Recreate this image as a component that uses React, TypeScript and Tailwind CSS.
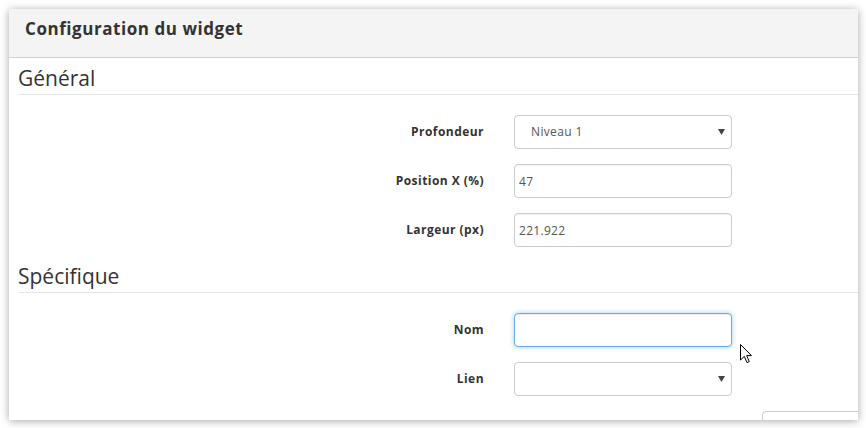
import React from 'react';

type Field = {
  label: string;
  kind: 'select' | 'input';
  value?: string;
  focused?: boolean;
};

const general: Field[] = [
  { label: 'Profondeur', kind: 'select', value: 'Niveau 1' },
  { label: 'Position X (%)', kind: 'input', value: '47' },
  { label: 'Largeur (px)', kind: 'input', value: '221.922' },
];

const specific: Field[] = [
  { label: 'Nom', kind: 'input', value: '', focused: true },
  { label: 'Lien', kind: 'select', value: '' },
];

const Caret = () => (
  <svg className="absolute right-[7px] top-[14px] pointer-events-none" width="7" height="6" viewBox="0 0 7 6">
    <path d="M0 0 L7 0 L3.5 6 Z" fill="#444" />
  </svg>
);

const FieldControl: React.FC<{ field: Field }> = ({ field }) => {
  if (field.kind === 'select') {
    return (
      <div className="relative h-[34px]">
        <select
          defaultValue={field.value}
          className="appearance-none w-full h-full rounded-[4px] border border-[#ccc] bg-white pl-[16px] text-[12px] tracking-[0.35px] text-[#555] outline-none"
        >
          <option value={field.value}>{field.value}</option>
        </select>
        <Caret />
      </div>
    );
  }
  return (
    <input
      readOnly
      value={field.value}
      className={`w-full h-[34px] rounded-[4px] border bg-white pl-[4px] text-[12px] tracking-[0.3px] text-[#555] outline-none ${
        field.focused
          ? 'border-[#66afe9] shadow-[inset_0_1px_1px_rgba(0,0,0,0.075),0_0_5px_rgba(102,175,233,0.6)]'
          : 'border-[#ccc] shadow-[inset_0_1px_1px_rgba(0,0,0,0.05)]'
      }`}
    />
  );
};

const Section: React.FC<{ title: string; fields: Field[]; top: string }> = ({ title, fields, top }) => (
  <div className={`ml-[9px] ${top}`}>
    <h2 className="text-[21px] leading-[28px] pb-[2px] border-b border-[#e5e5e5] text-[#333]">{title}</h2>
    <div className="mt-[20px] grid grid-cols-[466px_218px] gap-x-[30px] gap-y-[15px] items-center">
      {fields.map((f) => (
        <React.Fragment key={f.label}>
          <label className="text-right text-[12px] tracking-[0.45px] font-bold text-[#333]">{f.label}</label>
          <FieldControl field={f} />
        </React.Fragment>
      ))}
    </div>
  </div>
);

export default function App() {
  return (
    <div className="min-h-screen bg-white pl-[9px] pt-[9px] font-['Open_Sans',sans-serif] text-[#333]">
      <div className="relative w-[849px] h-[411px] overflow-hidden bg-white shadow-[0_1px_8px_rgba(0,0,0,0.35)]">
        {/* Header */}
        <div className="h-[49px] bg-[#f4f4f4] border-b border-[#d0d0d0] pl-4 pt-[7px]">
          <h1 className="text-[17px] leading-[26px] tracking-[0.55px] font-bold text-[#333]">Configuration du widget</h1>
        </div>

        <Section title="Général" fields={general} top="mt-[6px]" />
        <Section title="Spécifique" fields={specific} top="mt-[15px]" />

        {/* partially visible box at the bottom */}
        <div className="mt-[15px] ml-[753px] h-[24px] w-[120px] rounded-tl-[4px] border border-[#ccc] bg-white" />

        {/* mouse cursor */}
        <svg className="absolute left-[731px] top-[335px]" width="13" height="20" viewBox="0 0 13 20">
          <path d="M0.5 0.5 L0.5 16 L4.3 12.4 L7 18.6 L9.3 17.6 L6.7 11.6 L11.5 11.6 Z" fill="#fff" stroke="#000" strokeWidth="1" strokeLinejoin="round" />
        </svg>
      </div>
    </div>
  );
}
